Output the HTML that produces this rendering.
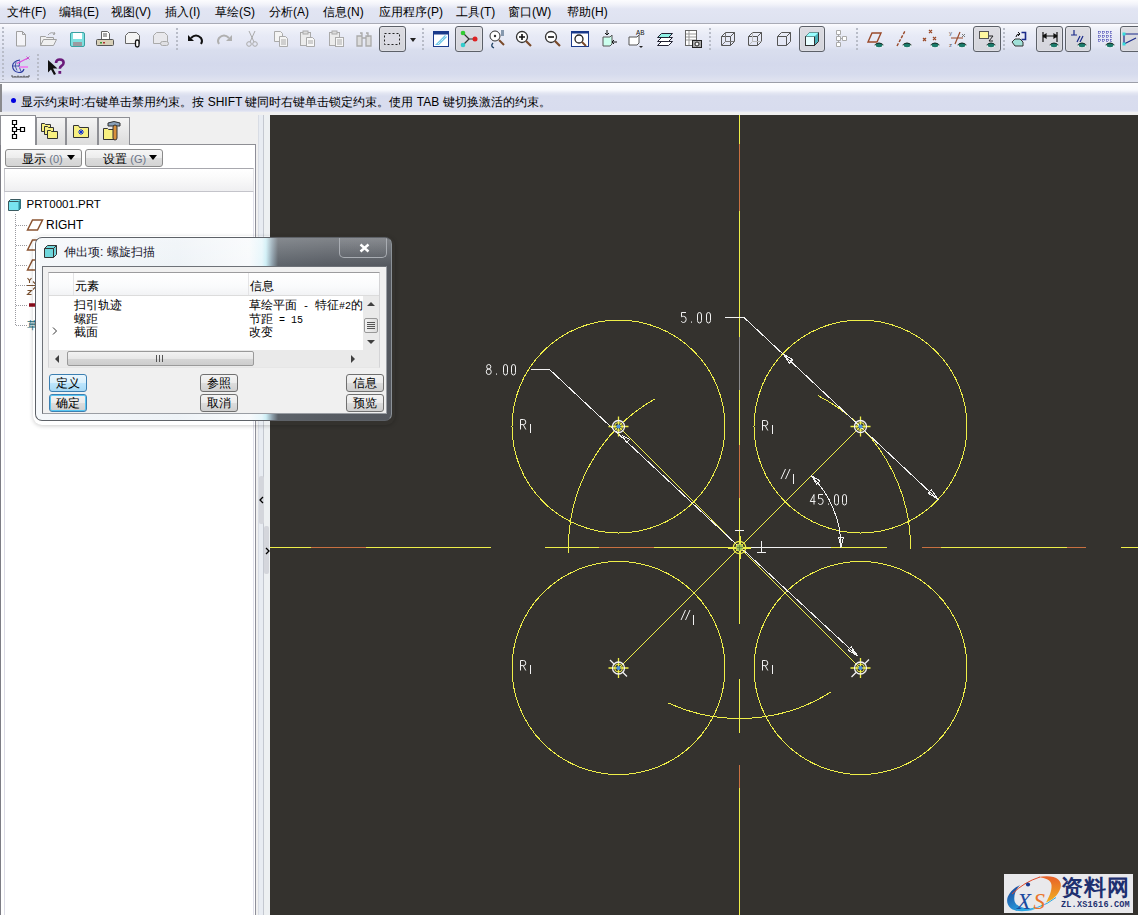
<!DOCTYPE html>
<html><head><meta charset="utf-8">
<style>
*{margin:0;padding:0;box-sizing:border-box}
html,body{width:1138px;height:915px;overflow:hidden;background:#f0f0f0;font-family:"Liberation Sans",sans-serif;font-size:12px;color:#000;position:relative}
.a{position:absolute}
#menubar{left:0;top:0;width:1138px;height:24px;background:linear-gradient(#fcfcfe 0,#f3f4fa 4px,#e2e5f3 9px,#dee2f0 23px);border-bottom:1px solid #a9abb6}
#menubar span{position:absolute;top:4px;font-size:12px}
#toolbar{left:0;top:24px;width:1138px;height:59px;background:linear-gradient(#fcfcff 0,#f0f2f9 4px,#e7eaf6 12px,#e3e6f4 22px,#d9deee 26px,#d4d9ec 40px,#d6dbed 50px,#e0e3f0 57px);border-bottom:1px solid #9c9ea8}
#status{left:0;top:83px;width:1138px;height:29px;background:linear-gradient(#fefeff 0,#f8f9fd 7px,#e4e7f3 10px,#d9ddee 13px,#d8dcee 27px,#e8eaf4 29px)}
#left{left:0;top:112px;width:270px;height:803px;background:#f0f0f0}
#canvas{left:270px;top:115px;width:868px;height:800px;background:#34322e}
.pb{background:linear-gradient(#dcdce2,#d4d5dc);border:1px solid #5c6068;border-radius:3px;box-shadow:inset 0 0 0 1px rgba(255,255,255,.2)}
.sep{width:2px;background:repeating-linear-gradient(#b8bcc8 0 2px,transparent 2px 4px)}
.tab{position:absolute;border:1px solid #8e8f94;border-bottom:none;background:linear-gradient(#f4f4f4,#dcdcdc)}
.btn{position:absolute;border:1px solid #8a8a8a;border-radius:3px;background:linear-gradient(#f6f6f6 0,#ececec 50%,#dcdcdc 51%,#d4d4d4 100%);font-size:12px;text-align:center}
.tree{position:absolute;font-size:12px;white-space:nowrap}
.dbtn{position:absolute;border:1px solid #707070;border-radius:3px;background:linear-gradient(#f3f3f3 0,#ebebeb 50%,#dddddd 51%,#cfcfcf 100%);font-size:12px;text-align:center;line-height:16px;height:18px;width:38px}
</style></head>
<body>
<div id="menubar" class="a">
<span style="left:7px">文件(F)</span>
<span style="left:59px">编辑(E)</span>
<span style="left:111px">视图(V)</span>
<span style="left:165px">插入(I)</span>
<span style="left:215px">草绘(S)</span>
<span style="left:269px">分析(A)</span>
<span style="left:323px">信息(N)</span>
<span style="left:379px">应用程序(P)</span>
<span style="left:456px">工具(T)</span>
<span style="left:508px">窗口(W)</span>
<span style="left:567px">帮助(H)</span>
</div>
<div id="toolbar" class="a"></div>
<div class="a sep" style="left:2px;top:27px;height:53px"></div><svg class="a" style="left:11.0px;top:28.5px" width="20" height="20" viewBox="0 0 20 20"><path d="M5.5,2.5 h6 l3,3 v11.5 h-9z M11.5,2.5 v3 h3" fill="#f4f4f8" stroke="#a0a0a0"/></svg><svg class="a" style="left:38.0px;top:28.5px" width="20" height="20" viewBox="0 0 20 20"><path d="M2.5,16.5 v-9 h5 l1,1 h7 v2 M2.5,16.5 l3,-6 h13 l-3,6z" fill="#f0f0f0" stroke="#a0a0a0"/><path d="M10,6 q3,-4 7,-1 l-1,-2 M17,5 l-2,0.5" fill="none" stroke="#a0a0a0"/></svg><svg class="a" style="left:66.5px;top:28.5px" width="20" height="20" viewBox="0 0 20 20"><rect x="3.5" y="3.5" width="14" height="14" rx="1.5" fill="#7fe0e0" stroke="#3aa0a0"/><rect x="6" y="4" width="9" height="6" fill="#fff"/><rect x="6" y="13" width="9" height="4" fill="#9a9aa0"/></svg><svg class="a" style="left:95.0px;top:28.5px" width="20" height="20" viewBox="0 0 20 20"><path d="M6.5,2.5 h6 l2,2 v6 h-8z" fill="#fff" stroke="#666"/><path d="M8,5h4M8,7h4" stroke="#555"/><rect x="1.5" y="10.5" width="17" height="6" rx="1" fill="#d8d0b8" stroke="#555"/><rect x="5" y="13" width="2" height="1.5" fill="#393"/><rect x="8" y="13" width="2" height="1.5" fill="#a33"/></svg><svg class="a" style="left:122.7px;top:28.5px" width="20" height="20" viewBox="0 0 20 20"><path d="M2.5,6.5 l3,-3 h8 l3,3 v8 h-14z" fill="#f4f4f4" stroke="#666"/><rect x="12.5" y="11" width="3.5" height="7" rx="1.7" fill="#fff" stroke="#111" stroke-width="1.3"/></svg><svg class="a" style="left:150.8px;top:28.5px" width="20" height="20" viewBox="0 0 20 20"><path d="M2.5,6.5 l3,-3 h8 l3,3 v8 h-14z" fill="#e8e8ec" stroke="#aaa"/><rect x="9.5" y="12.5" width="8" height="4" rx="2" fill="#e0e0e4" stroke="#aaa"/></svg><div class="a sep" style="left:176px;top:28px;height:22px"></div><svg class="a" style="left:186.3px;top:28.5px" width="20" height="20" viewBox="0 0 20 20"><path d="M5,9 q5,-5 10,0 q2,3 0,6" fill="none" stroke="#111" stroke-width="2"/><path d="M2,6 v6 h6z" fill="#111"/></svg><svg class="a" style="left:214.0px;top:28.5px" width="20" height="20" viewBox="0 0 20 20"><path d="M15,9 q-5,-5 -10,0 q-2,3 0,6" fill="none" stroke="#b0b0b0" stroke-width="2"/><path d="M18,6 v6 h-6z" fill="#b0b0b0"/></svg><svg class="a" style="left:241.6px;top:28.5px" width="20" height="20" viewBox="0 0 20 20"><path d="M7,2 l5,11 M13,2 l-5,11" stroke="#aaa" fill="none"/><circle cx="7" cy="15" r="2.3" fill="none" stroke="#aaa"/><circle cx="13" cy="15" r="2.3" fill="none" stroke="#aaa"/></svg><svg class="a" style="left:270.8px;top:28.5px" width="20" height="20" viewBox="0 0 20 20"><path d="M3.5,2.5 h6 l2,2 v8 h-8z" fill="#f4f4f4" stroke="#aaa"/><path d="M8.5,7.5 h6 l2,2 v8 h-8z" fill="#f4f4f4" stroke="#aaa"/><path d="M10,11h5M10,13h5M10,15h5" stroke="#aaa"/></svg><svg class="a" style="left:298.2px;top:28.5px" width="20" height="20" viewBox="0 0 20 20"><rect x="2.5" y="3.5" width="10" height="13" fill="#ececec" stroke="#aaa"/><rect x="5" y="2" width="5" height="3" fill="#ddd" stroke="#aaa"/><path d="M8.5,8.5 h6 l2,2 v7 h-8z" fill="#f8f8f8" stroke="#aaa"/><path d="M10,12h5M10,14h5" stroke="#aaa"/></svg><svg class="a" style="left:326.8px;top:28.5px" width="20" height="20" viewBox="0 0 20 20"><rect x="2.5" y="3.5" width="10" height="13" fill="#ececec" stroke="#aaa"/><rect x="5" y="2" width="5" height="3" fill="#ddd" stroke="#aaa"/><rect x="8.5" y="8.5" width="8" height="9" fill="#f8f8f8" stroke="#aaa"/><path d="M10,11h5M10,13h5M10,15h5" stroke="#aaa"/></svg><svg class="a" style="left:354.2px;top:28.5px" width="20" height="20" viewBox="0 0 20 20"><path d="M3,7 h5 v10 h-5z M12,7 h5 v10 h-5z M6,4 h2 v4 M12,4 h2 v4 M8,9 h4" fill="#ddd" stroke="#aaa" stroke-width="1.3"/></svg><div class="a pb" style="left:378.5px;top:26px;width:27.5px;height:25.5px"></div><svg class="a" style="left:382.0px;top:28.5px" width="20" height="20" viewBox="0 0 20 20"><rect x="2.5" y="4.5" width="15" height="11" fill="#dcdce4" stroke="#222" stroke-dasharray="2,2"/></svg><svg class="a" style="left:407.6px;top:33.5px" width="10" height="12" viewBox="0 0 10 12"><path d="M2,4 h6 l-3,4z" fill="#222"/></svg><div class="a sep" style="left:421.5px;top:28px;height:22px"></div><svg class="a" style="left:431.0px;top:28.5px" width="20" height="20" viewBox="0 0 20 20"><rect x="2.5" y="2.5" width="15" height="15" fill="#fff" stroke="#1a3a8a" stroke-width="1"/><rect x="2.5" y="2.5" width="15" height="3" fill="#1a3a8a"/><path d="M4,16 l10,-10 l2,2 l-8,8z" fill="#6fc8e8"/><path d="M7,15 l8,-8" stroke="#fff" stroke-dasharray="1,1"/></svg><div class="a pb" style="left:455px;top:26px;width:28px;height:25.5px"></div><svg class="a" style="left:459.0px;top:28.5px" width="20" height="20" viewBox="0 0 20 20"><path d="M10,10 L4,4 M10,10 H16 M10,10 L4,16" stroke="#333" stroke-width="1.2"/><circle cx="4" cy="4" r="2.3" fill="#3c3"/><circle cx="16" cy="10" r="2.5" fill="#d22"/><circle cx="4" cy="16" r="2.3" fill="#3cc"/></svg><svg class="a" style="left:486.5px;top:28.5px" width="20" height="20" viewBox="0 0 20 20"><circle cx="8" cy="7" r="5" fill="#fff" stroke="#333"/><circle cx="8" cy="7" r="1.2" fill="#333"/><path d="M12,11 l5,5" stroke="#7a4a2a" stroke-width="2"/><path d="M6,14 q-3,3 1,5" stroke="#246" fill="none" stroke-width="1.3"/><path d="M14,2h3M14,4h3M14,6h3" stroke="#246"/></svg><svg class="a" style="left:514.0px;top:28.5px" width="20" height="20" viewBox="0 0 20 20"><circle cx="8" cy="8" r="5.5" fill="#fff" stroke="#333" stroke-width="1.3"/><path d="M5,8h6M8,5v6" stroke="#111" stroke-width="1.6"/><path d="M12,12 l5,5" stroke="#7a4a2a" stroke-width="2.2"/></svg><svg class="a" style="left:543.0px;top:28.5px" width="20" height="20" viewBox="0 0 20 20"><circle cx="8" cy="8" r="5.5" fill="#fff" stroke="#333" stroke-width="1.3"/><path d="M5,8h6" stroke="#111" stroke-width="1.6"/><path d="M12,12 l5,5" stroke="#7a4a2a" stroke-width="2.2"/></svg><svg class="a" style="left:570.0px;top:28.5px" width="20" height="20" viewBox="0 0 20 20"><rect x="1.5" y="2.5" width="17" height="15" fill="#fff" stroke="#1a3a8a"/><rect x="1.5" y="2.5" width="17" height="2" fill="#1a3a8a"/><circle cx="9" cy="10" r="4" fill="none" stroke="#222" stroke-width="1.3"/><path d="M12,13 l4,4" stroke="#7a4a2a" stroke-width="2"/></svg><svg class="a" style="left:598.5px;top:28.5px" width="20" height="20" viewBox="0 0 20 20"><path d="M4,8 h7 l2,-2 v9 l-2,2 h-7z" fill="#cfe" stroke="#555"/><path d="M8,1 v5 M6,4 l2,2 l2,-2 M18,13 h-5 M15,11 l-2,2 l2,2" stroke="#111" fill="none"/></svg><svg class="a" style="left:626.0px;top:28.5px" width="20" height="20" viewBox="0 0 20 20"><path d="M3,8 h8 l2,-2 v8 l-2,2 h-8z" fill="#fff" stroke="#555"/><text x="10" y="6" font-size="7" font-family="Liberation Mono" fill="#222">AB</text><path d="M13,17 h4 l-2,2z" fill="#222"/></svg><svg class="a" style="left:655.0px;top:28.5px" width="20" height="20" viewBox="0 0 20 20"><path d="M2.5,16.5 l4,-4 h11 l-4,4z" fill="#fff" stroke="#223"/><path d="M2.5,12.5 l4,-4 h11 l-4,4z" fill="#fff" stroke="#223"/><path d="M2.5,8.5 l4,-4 h11 l-4,4z" fill="#8ff0e4" stroke="#223"/></svg><svg class="a" style="left:683.0px;top:28.5px" width="20" height="20" viewBox="0 0 20 20"><rect x="2.5" y="1.5" width="11" height="15" fill="#fff" stroke="#666"/><path d="M3,5h10M3,8h10M3,11h10M6,2v14" stroke="#999"/><rect x="9.5" y="11.5" width="9" height="7" fill="#aaa" stroke="#222"/><circle cx="14" cy="15" r="2" fill="#fff" stroke="#222"/></svg><div class="a sep" style="left:708.5px;top:28px;height:22px"></div><svg class="a" style="left:717.7px;top:28.5px" width="20" height="20" viewBox="0 0 20 20"><path d="M3.5,7.5 l4,-4 h9 v9 l-4,4 h-9z" fill="none" stroke="#555"/><path d="M3.5,7.5 h9 v9 M12.5,7.5 l4,-4" fill="none" stroke="#555"/><path d="M3.5,16.5 l4,-4 h9 M7.5,3.5 v9" stroke="#777" fill="none"/></svg><svg class="a" style="left:745.4px;top:28.5px" width="20" height="20" viewBox="0 0 20 20"><path d="M3.5,7.5 l4,-4 h9 v9 l-4,4 h-9z" fill="none" stroke="#555"/><path d="M3.5,7.5 h9 v9 M12.5,7.5 l4,-4" fill="none" stroke="#555"/><path d="M3.5,16.5 l4,-4 h9 M7.5,3.5 v9" stroke="#bbb" fill="none"/></svg><svg class="a" style="left:773.8px;top:28.5px" width="20" height="20" viewBox="0 0 20 20"><path d="M3.5,7.5 l4,-4 h9 v9 l-4,4 h-9z" fill="none" stroke="#555"/><path d="M3.5,7.5 h9 v9 M12.5,7.5 l4,-4" fill="none" stroke="#555"/></svg><div class="a pb" style="left:799px;top:26px;width:26.200000000000045px;height:25.5px"></div><svg class="a" style="left:802.0px;top:28.5px" width="20" height="20" viewBox="0 0 20 20"><path d="M3.5,7.5 l4,-4 h9 v9 l-4,4 h-9z" fill="#4ab0b8" stroke="#333"/><rect x="3.5" y="7.5" width="9" height="9" fill="#e8ffff" stroke="#333"/><path d="M3.5,7.5 l4,-4 h9 l-4,4z" fill="#9ff"/></svg><svg class="a" style="left:829.7px;top:28.5px" width="20" height="20" viewBox="0 0 20 20"><path d="M6.5,1.5h4v4h-4z M6.5,7.5h4v4h-4z M6.5,13.5h4v4h-4z M12.5,7.5h4v4h-4z M8.5,5.5v2 M8.5,11.5v2 M10.5,9.5h2" fill="#fff" stroke="#aaa"/></svg><div class="a sep" style="left:856.4px;top:28px;height:22px"></div><svg class="a" style="left:865.3px;top:28.5px" width="20" height="20" viewBox="0 0 20 20"><path d="M3,13 l4,-9 h9 l-4,9z" fill="none" stroke="#9a4a2a" stroke-width="1.4"/><ellipse cx="14" cy="16" rx="4.5" ry="2.5" fill="#fff"/><ellipse cx="14" cy="16" rx="3.5" ry="2.2" fill="#1b7a6a"/><path d="M9.5,16 q4.5,-4 9,0" stroke="#111" fill="none" stroke-width="0.8"/></svg><svg class="a" style="left:893.0px;top:28.5px" width="20" height="20" viewBox="0 0 20 20"><path d="M4,17 l8,-15" stroke="#9a4a2a" stroke-width="1.4" stroke-dasharray="3,1.5"/><ellipse cx="14" cy="16" rx="4.5" ry="2.5" fill="#fff"/><ellipse cx="14" cy="16" rx="3.5" ry="2.2" fill="#1b7a6a"/><path d="M9.5,16 q4.5,-4 9,0" stroke="#111" fill="none" stroke-width="0.8"/></svg><svg class="a" style="left:920.7px;top:28.5px" width="20" height="20" viewBox="0 0 20 20"><path d="M8,1 l3,3 M11,1 l-3,3 M2,9 l3,3 M5,9 l-3,3 M12,8 l3,3 M15,8 l-3,3" stroke="#9a4a2a" stroke-width="1.2"/><ellipse cx="14" cy="16" rx="4.5" ry="2.5" fill="#fff"/><ellipse cx="14" cy="16" rx="3.5" ry="2.2" fill="#1b7a6a"/><path d="M9.5,16 q4.5,-4 9,0" stroke="#111" fill="none" stroke-width="0.8"/></svg><svg class="a" style="left:948.4px;top:28.5px" width="20" height="20" viewBox="0 0 20 20"><path d="M3,9 h12 M12,3 l-5,12" stroke="#9a4a2a" stroke-width="1.2"/><text x="1" y="6" font-size="6" fill="#555" font-family="Liberation Sans">y</text><text x="1" y="18" font-size="6" fill="#555" font-family="Liberation Sans">z</text><path d="M14,5 l3,3 M17,5 l-3,3" stroke="#777"/><ellipse cx="14" cy="16" rx="4.5" ry="2.5" fill="#fff"/><ellipse cx="14" cy="16" rx="3.5" ry="2.2" fill="#1b7a6a"/><path d="M9.5,16 q4.5,-4 9,0" stroke="#111" fill="none" stroke-width="0.8"/></svg><div class="a pb" style="left:973px;top:26px;width:28px;height:25.5px"></div><svg class="a" style="left:977.0px;top:28.5px" width="20" height="20" viewBox="0 0 20 20"><rect x="2.5" y="2.5" width="9" height="7" fill="#fff8a0" stroke="#555"/><path d="M12,7 h4 l-4,5 h4" stroke="#222" fill="none"/><ellipse cx="14" cy="16" rx="4.5" ry="2.5" fill="#fff"/><ellipse cx="14" cy="16" rx="3.5" ry="2.2" fill="#1b7a6a"/><path d="M9.5,16 q4.5,-4 9,0" stroke="#111" fill="none" stroke-width="0.8"/></svg><div class="a sep" style="left:1003px;top:28px;height:22px"></div><svg class="a" style="left:1010.0px;top:28.5px" width="20" height="20" viewBox="0 0 20 20"><path d="M11.5,3.5 h4 v7 h-4" fill="none" stroke="#1a2a8a" stroke-width="1.6"/><path d="M6,8 q0,-3 4,-3 M8,3 l2,2 l-2,2" stroke="#111" fill="none"/><path d="M2,13 l3,-3 h5 l3,3 v4 h-8z" fill="#a0e0d8" stroke="#333"/></svg><div class="a pb" style="left:1036.3px;top:26px;width:26.90000000000009px;height:25.5px"></div><svg class="a" style="left:1039.7px;top:28.5px" width="20" height="20" viewBox="0 0 20 20"><path d="M3,3 v10 M17,3 v10 M3,7 h14 M3,7 l3,-2 v4z M17,7 l-3,-2 v4z" stroke="#111" fill="#111" stroke-width="1.2"/><ellipse cx="14" cy="16" rx="4.5" ry="2.5" fill="#fff"/><ellipse cx="14" cy="16" rx="3.5" ry="2.2" fill="#1b7a6a"/><path d="M9.5,16 q4.5,-4 9,0" stroke="#111" fill="none" stroke-width="0.8"/></svg><div class="a pb" style="left:1064.5px;top:26px;width:26.90000000000009px;height:25.5px"></div><svg class="a" style="left:1068.0px;top:28.5px" width="20" height="20" viewBox="0 0 20 20"><path d="M3,6 h6 M6,1 v5 M9,13 l3,-6 M12,13 l3,-6" stroke="#1a2a8a" stroke-width="1.2" fill="none"/><ellipse cx="14" cy="16" rx="4.5" ry="2.5" fill="#fff"/><ellipse cx="14" cy="16" rx="3.5" ry="2.2" fill="#1b7a6a"/><path d="M9.5,16 q4.5,-4 9,0" stroke="#111" fill="none" stroke-width="0.8"/></svg><svg class="a" style="left:1095.5px;top:28.5px" width="20" height="20" viewBox="0 0 20 20"><path d="M2,3h14M2,7h14M2,11h14M3,2v12M7,2v12M11,2v12M15,2v12" stroke="#3333aa" stroke-dasharray="1,1"/><ellipse cx="14" cy="16" rx="4.5" ry="2.5" fill="#fff"/><ellipse cx="14" cy="16" rx="3.5" ry="2.2" fill="#1b7a6a"/><path d="M9.5,16 q4.5,-4 9,0" stroke="#111" fill="none" stroke-width="0.8"/></svg><div class="a pb" style="left:1120.3px;top:26px;width:26.700000000000045px;height:25.5px"></div><svg class="a" style="left:1121.0px;top:28.5px" width="20" height="20" viewBox="0 0 20 20"><path d="M3,5 v10 M3,5 h14 M3,15 l12,-6" stroke="#1a2a8a" stroke-width="1.2"/><rect x="1.5" y="3.5" width="3" height="3" fill="#3dd"/><rect x="1.5" y="13.5" width="3" height="3" fill="#3dd"/></svg><svg class="a" style="left:11.0px;top:55.5px" width="20" height="22" viewBox="0 0 20 22"><path d="M9,4 Q2,5 1.5,10 Q2,16 8,16.5 Q12,16.5 13,13" stroke="#2a3aa0" stroke-width="1.1" fill="none"/><path d="M5,6 Q3,10 6,14.5 M9,5 Q6.5,10 10,15.5 M2,10 h7" stroke="#2a3aa0" stroke-width="0.8" fill="none"/><path d="M6,7.5 L17,2" stroke="#e050e0" stroke-width="1.3"/><path d="M15.5,0.5 l3,3 M18.5,0.5 l-3,3" stroke="#c040c0" stroke-width="0.8"/><path d="M8,11 h9" stroke="#f070f0" stroke-width="1.5"/><path d="M1,21 h17 M1,19 v2 M4,20 v1 M7,19.5 v1.5 M10,20 v1 M13,19.5 v1.5 M16,20 v1 M18,19 v2" stroke="#444" stroke-width="0.9"/></svg><div class="a sep" style="left:37px;top:54px;height:26px"></div><svg class="a" style="left:46.0px;top:56.5px" width="20" height="20" viewBox="0 0 20 20"><path d="M2,3 v12.5 l3,-3 l3,5.5 l2,-1 l-3,-5.5 h4.5z" fill="#111"/><path d="M10,6 q0,-3.5 3.8,-3.5 q3.8,0 3.8,3.3 q0,2 -2.2,3.2 q-1.6,0.9 -1.6,2.8" stroke="#6a1a7a" stroke-width="2.6" fill="none"/><rect x="12.4" y="14" width="2.8" height="2.8" fill="#6a1a7a"/></svg>
<div id="status" class="a"><div class="a" style="left:0;top:1px;width:1.5px;height:28px;background:#8a8a8e"></div>
<div class="a" style="left:11px;top:15px;width:5px;height:5px;border-radius:50%;background:#0000e0"></div>
<span class="a" style="left:21px;top:11px;font-size:12px">显示约束时:右键单击禁用约束。按 SHIFT 键同时右键单击锁定约束。使用 TAB 键切换激活的约束。</span>
</div>
<div id="left" class="a"></div>
<div class="a" style="left:0;top:115px;width:1px;height:800px;background:#7c7c84"></div>
<div class="a" style="left:1px;top:144px;width:255px;height:771px;background:#fff;border-top:1px solid #8e8f94"></div>
<div class="a" style="left:4px;top:192px;width:1px;height:723px;background:#dcdce6"></div>
<div class="a" style="left:253px;top:168px;width:1px;height:747px;background:#e0e0ea"></div>
<div class="a" style="left:255px;top:144px;width:1px;height:771px;background:#8e8e98"></div>
<div class="a" style="left:258px;top:115px;width:1px;height:800px;background:#d8dce4"></div>
<div class="a" style="left:259px;top:115px;width:5px;height:800px;background:#e8ecf2"></div>
<div class="a" style="left:263px;top:115px;width:1px;height:800px;background:#c4c8d0"></div>
<div class="a" style="left:264px;top:115px;width:6px;height:800px;background:#edf0f2"></div>
<!-- sash arrows -->
<div class="a" style="left:259px;top:476px;width:5px;height:48px;background:#d4d6dc;border-radius:2px"></div>
<svg class="a" style="left:259px;top:496px" width="6" height="8"><path d="M4,1 l-3,3 l3,3" stroke="#000" stroke-width="1.3" fill="none"/></svg>
<div class="a" style="left:264px;top:526px;width:5px;height:48px;background:#d4d6dc;border-radius:2px"></div>
<svg class="a" style="left:264px;top:547px" width="6" height="8"><path d="M2,1 l3,3 l-3,3" stroke="#000" stroke-width="1.3" fill="none"/></svg>
<!-- tabs -->
<div class="tab" style="left:36px;top:117px;width:30px;height:28px"></div>
<div class="tab" style="left:66px;top:117px;width:32px;height:28px"></div>
<div class="tab" style="left:98px;top:117px;width:32px;height:28px"></div>
<div class="a" style="left:0;top:115px;width:36px;height:30px;background:#fff;border:1px solid #8e8f94;border-bottom:none"></div>
<svg class="a" style="left:8px;top:118px" width="20" height="22"><path d="M4.5,2.5h4v4h-4z M4.5,9.5h4v4h-4z M4.5,16.5h4v4h-4z M12.5,9.5h4v4h-4z M6.5,6.5v3 M6.5,13.5v3 M8.5,11.5h4" fill="#fff" stroke="#000" stroke-width="1.2"/></svg>
<svg class="a" style="left:40px;top:120px" width="22" height="22"><path d="M1.5,3.5h3l1,1h5v7h-9z" fill="#f8f080" stroke="#333"/><path d="M4.5,6.5h3l1,1h5v7h-9z" fill="#f8f080" stroke="#333"/><path d="M7.5,10.5h3l1,1h6v7h-10z" fill="#f8f080" stroke="#333"/></svg>
<svg class="a" style="left:71px;top:122px" width="22" height="20"><path d="M2.5,3.5h5l1,2h9v10h-15z" fill="#f8f080" stroke="#333"/><path d="M10,7v6M7,10h6M8,8l4,4M12,8l-4,4" stroke="#0a2ad8" stroke-width="1"/></svg>
<svg class="a" style="left:102px;top:120px" width="24" height="22"><path d="M1.5,8.5h4l1,1h6v10h-11z" fill="#f8f080" stroke="#333"/><path d="M6,3 q6,-3 12,0 v3 h-12z" fill="#8aa0b8" stroke="#333"/><rect x="11" y="5" width="4" height="15" rx="2" fill="#d8903a" stroke="#333"/></svg>
<!-- buttons -->
<div class="btn" style="left:5px;top:149px;width:77px;height:18px"></div>
<span class="tree" style="left:22px;top:151px">显示 <span style="color:#6a7488;font-size:11px">(0)</span></span>
<svg class="a" style="left:66px;top:154px" width="10" height="8"><path d="M1,1h8l-4,5z" fill="#000"/></svg>
<div class="btn" style="left:85px;top:149px;width:78px;height:18px"></div>
<span class="tree" style="left:103px;top:151px">设置 <span style="color:#6a7488;font-size:11px">(G)</span></span>
<svg class="a" style="left:148px;top:154px" width="10" height="8"><path d="M1,1h8l-4,5z" fill="#000"/></svg>
<div class="a" style="left:4px;top:168px;width:250px;height:24px;background:linear-gradient(#fff 0,#fbfbfb 35%,#efeff1 100%);border:1px solid #c4c4ca;border-top-color:#a8a8ae;border-right-color:#e4e4e8"></div>
<!-- tree -->
<svg class="a" style="left:7px;top:198px" width="16" height="15"><path d="M1.5,3.5 l2,-2 h10 v9 l-2,2 h-10z" fill="#78e4f0" stroke="#3a5a60"/><path d="M11.5,3.5 l2,-2 v9 l-2,2z" fill="#2a8a98"/><path d="M1.5,3.5 h10" stroke="#3a5a60"/></svg>
<span class="tree" style="left:26.5px;top:198px;font-size:11.5px">PRT0001.PRT</span>
<div class="a" style="left:15px;top:214px;width:1px;height:112px;background:repeating-linear-gradient(#9a9aa0 0 1px,transparent 1px 2px)"></div>
<div class="a" style="left:16px;top:225px;width:11px;height:1px;background:repeating-linear-gradient(90deg,#9a9aa0 0 1px,transparent 1px 2px)"></div>
<div class="a" style="left:16px;top:245px;width:11px;height:1px;background:repeating-linear-gradient(90deg,#9a9aa0 0 1px,transparent 1px 2px)"></div>
<div class="a" style="left:16px;top:265px;width:11px;height:1px;background:repeating-linear-gradient(90deg,#9a9aa0 0 1px,transparent 1px 2px)"></div>
<div class="a" style="left:16px;top:285px;width:11px;height:1px;background:repeating-linear-gradient(90deg,#9a9aa0 0 1px,transparent 1px 2px)"></div>
<div class="a" style="left:16px;top:305px;width:11px;height:1px;background:repeating-linear-gradient(90deg,#9a9aa0 0 1px,transparent 1px 2px)"></div>
<div class="a" style="left:16px;top:325px;width:11px;height:1px;background:repeating-linear-gradient(90deg,#9a9aa0 0 1px,transparent 1px 2px)"></div>
<svg class="a" style="left:26px;top:218px" width="18" height="14"><path d="M1.5,12 l5,-10 h10 l-5,10z" fill="none" stroke="#8a5432" stroke-width="1.5"/></svg>
<span class="tree" style="left:46px;top:218px">RIGHT</span>
<svg class="a" style="left:26px;top:238px" width="18" height="14"><path d="M1.5,12 l5,-10 h10 l-5,10z" fill="none" stroke="#8a5432" stroke-width="1.5"/></svg>
<svg class="a" style="left:26px;top:258px" width="18" height="14"><path d="M1.5,12 l5,-10 h10 l-5,10z" fill="none" stroke="#8a5432" stroke-width="1.5"/></svg>
<svg class="a" style="left:26px;top:276px" width="12" height="20"><path d="M1,9.5 h10 M7,5.5 l4,4 l-4,4 M1.5,2 l2,2.5 l2,-2.5 M3.5,4.5 v2.5 M1.5,14.5 h4 l-4,4 h4" stroke="#7a5232" stroke-width="1.1" fill="none"/></svg>
<svg class="a" style="left:29px;top:298px" width="10" height="16"><path d="M0,7 h9" stroke="#8a0a1a" stroke-width="3.5"/><path d="M7.5,1 v14" stroke="#8a0a1a" stroke-width="2"/></svg>
<span class="tree" style="left:27px;top:318px;color:#1a6a7a;font-size:11px">草</span>

<div id="canvas" class="a"></div>
<svg class="a" style="left:270px;top:115px" width="868" height="800" viewBox="270 115 868 800" shape-rendering="crispEdges"><line x1="270" y1="547.5" x2="311" y2="547.5" stroke="#eeee48" stroke-width="1"/><line x1="311" y1="547.5" x2="366" y2="547.5" stroke="#c87040" stroke-width="1"/><line x1="366" y1="547.5" x2="490.5" y2="547.5" stroke="#eeee48" stroke-width="1"/><line x1="545" y1="547.5" x2="599" y2="547.5" stroke="#eeee48" stroke-width="1"/><line x1="599" y1="547.5" x2="654" y2="547.5" stroke="#c87040" stroke-width="1"/><line x1="654" y1="547.5" x2="750" y2="547.5" stroke="#eeee48" stroke-width="1"/><line x1="750" y1="547.5" x2="831" y2="547.5" stroke="#f2f2f2" stroke-width="1"/><line x1="831" y1="547.5" x2="887" y2="547.5" stroke="#eeee48" stroke-width="1"/><line x1="922" y1="547.5" x2="941" y2="547.5" stroke="#c87040" stroke-width="1"/><line x1="941" y1="547.5" x2="1067" y2="547.5" stroke="#eeee48" stroke-width="1"/><line x1="1067" y1="547.5" x2="1086" y2="547.5" stroke="#c87040" stroke-width="1"/><line x1="1121" y1="547.5" x2="1138" y2="547.5" stroke="#eeee48" stroke-width="1"/><line x1="739.5" y1="115" x2="739.5" y2="144" stroke="#eeee48" stroke-width="1"/><line x1="739.5" y1="144" x2="739.5" y2="211" stroke="#c87040" stroke-width="1"/><line x1="739.5" y1="211" x2="739.5" y2="337" stroke="#eeee48" stroke-width="1"/><line x1="739.5" y1="337" x2="739.5" y2="390" stroke="#8a8a8a" stroke-width="1"/><line x1="739.5" y1="390" x2="739.5" y2="445" stroke="#eeee48" stroke-width="1"/><line x1="739.5" y1="445" x2="739.5" y2="498" stroke="#c87040" stroke-width="1"/><line x1="739.5" y1="498" x2="739.5" y2="624" stroke="#eeee48" stroke-width="1"/><line x1="739.5" y1="679" x2="739.5" y2="733" stroke="#eeee48" stroke-width="1"/><line x1="739.5" y1="765" x2="739.5" y2="788" stroke="#c87040" stroke-width="1"/><line x1="739.5" y1="788" x2="739.5" y2="915" stroke="#eeee48" stroke-width="1"/><circle cx="618.5" cy="426.5" r="106.5" fill="none" stroke="#eeee48" stroke-width="1"/><circle cx="860.5" cy="426.5" r="106.5" fill="none" stroke="#eeee48" stroke-width="1"/><circle cx="618.5" cy="668" r="106.5" fill="none" stroke="#eeee48" stroke-width="1"/><circle cx="860.5" cy="668" r="106.5" fill="none" stroke="#eeee48" stroke-width="1"/><path d="M654.48,399.14 A171,171 0 0 0 568.59,553.03" fill="none" stroke="#eeee48" stroke-width="1"/><path d="M817.78,395.47 A171,171 0 0 1 910.49,549.0" fill="none" stroke="#eeee48" stroke-width="1"/><path d="M668.17,702.91 A171,171 0 0 0 831.3,691.77" fill="none" stroke="#eeee48" stroke-width="1"/><line x1="739.5" y1="547.5" x2="618.5" y2="426.5" stroke="#eeee48" stroke-width="1"/><line x1="739.5" y1="547.5" x2="860.5" y2="426.5" stroke="#eeee48" stroke-width="1"/><line x1="739.5" y1="547.5" x2="618.5" y2="668.5" stroke="#eeee48" stroke-width="1"/><line x1="739.5" y1="547.5" x2="860.5" y2="668.5" stroke="#eeee48" stroke-width="1"/><g stroke="#f2f2f2" stroke-width="1" fill="none"><path d="M725,317.5 H744 L938.4,500"/><path d="M530.5,369.5 H549.6 L737,545"/><path d="M743.5,550 L857.7,656"/><path d="M841.0,547.5 A101.5,101.5 0 0 0 811.3,475.7"/><path d="M761.5,541 V552.5 M756.5,552.5 H766"/><path d="M735,530.5 H743.5"/></g><path d="M783.2,354.0 L792.8,359.8 L789.6,363.2 Z" fill="none" stroke="#f2f2f2" stroke-width="1"/><path d="M937.8,499.0 L928.2,493.2 L931.4,489.8 Z" fill="none" stroke="#f2f2f2" stroke-width="1"/><path d="M857.7,656.0 L848.1,650.2 L851.2,646.8 Z" fill="none" stroke="#f2f2f2" stroke-width="1"/><path d="M841.0,547.5 L838.7,537.5 L843.3,537.5 Z" fill="none" stroke="#f2f2f2" stroke-width="1"/><path d="M811.3,475.7 L820.1,481.0 L816.9,484.3 Z" fill="none" stroke="#f2f2f2" stroke-width="1"/><path d="M623.0,436.0 L629.6,439.2 L626.5,442.5 Z" fill="none" stroke="#f2f2f2" stroke-width="1"/><g shape-rendering="geometricPrecision"><path d="M608.5,426.5 H628.5 M618.5,416.5 V436.5" stroke="#eeee48" stroke-width="1.3"/><circle cx="618.5" cy="426.5" r="6" fill="none" stroke="#f2f2f2" stroke-width="1.3"/><circle cx="618.5" cy="426.5" r="4" fill="none" stroke="#eeee48" stroke-width="1"/><circle cx="618.5" cy="426.5" r="2.1" fill="#4a90d8"/></g><g shape-rendering="geometricPrecision"><path d="M850.5,426.5 H870.5 M860.5,416.5 V436.5" stroke="#eeee48" stroke-width="1.3"/><circle cx="860.5" cy="426.5" r="6" fill="none" stroke="#f2f2f2" stroke-width="1.3"/><circle cx="860.5" cy="426.5" r="4" fill="none" stroke="#eeee48" stroke-width="1"/><circle cx="860.5" cy="426.5" r="2.1" fill="#4a90d8"/></g><g shape-rendering="geometricPrecision"><path d="M610,660 L614.5,664.5 M622.5,672 L627,676.5" stroke="#f2f2f2" stroke-width="1.3" fill="none"/><path d="M608.5,668 H628.5 M618.5,658 V678" stroke="#eeee48" stroke-width="1.3"/><circle cx="618.5" cy="668" r="6" fill="none" stroke="#f2f2f2" stroke-width="1.3"/><circle cx="618.5" cy="668" r="4" fill="none" stroke="#eeee48" stroke-width="1"/><circle cx="618.5" cy="668" r="2.1" fill="#4a90d8"/></g><g shape-rendering="geometricPrecision"><path d="M869,659.5 L865,663.5 M856,672.5 L851.5,677" stroke="#f2f2f2" stroke-width="1.3" fill="none"/><path d="M850.5,668 H870.5 M860.5,658 V678" stroke="#eeee48" stroke-width="1.3"/><circle cx="860.5" cy="668" r="6" fill="none" stroke="#f2f2f2" stroke-width="1.3"/><circle cx="860.5" cy="668" r="4" fill="none" stroke="#eeee48" stroke-width="1"/><circle cx="860.5" cy="668" r="2.1" fill="#4a90d8"/></g><path d="M728,547.5 H751 M739.5,536 V559" stroke="#eeee48" stroke-width="2"/><circle cx="739.5" cy="547.5" r="6.2" fill="none" stroke="#eeee48" stroke-width="1.3" shape-rendering="geometricPrecision"/><circle cx="739.5" cy="547.5" r="3.6" fill="#9cc060" stroke="#eeee48" stroke-width="0.8" shape-rendering="geometricPrecision"/><path d="M736.5,547.5 h6 M739.5,544.5 v6" stroke="#5a7a3a" stroke-width="0.8"/><path shape-rendering="geometricPrecision" transform="translate(681,312)" d="M5,0.5 h-4.5 v4.3 q0.8,-0.5 2,-0.5 q2.7,0 2.7,3 q0,3.2 -2.7,3.2 q-1.5,0 -2.3,-1.2" fill="none" stroke="#f2f2f2" stroke-width="1"/><path shape-rendering="geometricPrecision" transform="translate(689,312)" d="M2.5,9.5 v1.2" fill="none" stroke="#f2f2f2" stroke-width="1"/><path shape-rendering="geometricPrecision" transform="translate(697,312)" d="M2.5,0.5 q2,0 2,2.5 v5.5 q0,2.5 -2,2.5 q-2,0 -2,-2.5 v-5.5 q0,-2.5 2,-2.5z" fill="none" stroke="#f2f2f2" stroke-width="1"/><path shape-rendering="geometricPrecision" transform="translate(706,312)" d="M2.5,0.5 q2,0 2,2.5 v5.5 q0,2.5 -2,2.5 q-2,0 -2,-2.5 v-5.5 q0,-2.5 2,-2.5z" fill="none" stroke="#f2f2f2" stroke-width="1"/><path shape-rendering="geometricPrecision" transform="translate(486,364)" d="M2.75,0.5 q2.1,0 2.1,2.3 q0,2.2 -2.1,2.2 q-2.1,0 -2.1,-2.2 q0,-2.3 2.1,-2.3z M2.75,5 q2.5,0 2.5,2.8 q0,2.7 -2.5,2.7 q-2.5,0 -2.5,-2.7 q0,-2.8 2.5,-2.8z" fill="none" stroke="#f2f2f2" stroke-width="1"/><path shape-rendering="geometricPrecision" transform="translate(494,364)" d="M2.5,9.5 v1.2" fill="none" stroke="#f2f2f2" stroke-width="1"/><path shape-rendering="geometricPrecision" transform="translate(503,364)" d="M2.5,0.5 q2,0 2,2.5 v5.5 q0,2.5 -2,2.5 q-2,0 -2,-2.5 v-5.5 q0,-2.5 2,-2.5z" fill="none" stroke="#f2f2f2" stroke-width="1"/><path shape-rendering="geometricPrecision" transform="translate(511,364)" d="M2.5,0.5 q2,0 2,2.5 v5.5 q0,2.5 -2,2.5 q-2,0 -2,-2.5 v-5.5 q0,-2.5 2,-2.5z" fill="none" stroke="#f2f2f2" stroke-width="1"/><path shape-rendering="geometricPrecision" transform="translate(810,494)" d="M4,10.5 v-10 l-3.8,7 h5.3" fill="none" stroke="#f2f2f2" stroke-width="1"/><path shape-rendering="geometricPrecision" transform="translate(818,494)" d="M5,0.5 h-4.5 v4.3 q0.8,-0.5 2,-0.5 q2.7,0 2.7,3 q0,3.2 -2.7,3.2 q-1.5,0 -2.3,-1.2" fill="none" stroke="#f2f2f2" stroke-width="1"/><path shape-rendering="geometricPrecision" transform="translate(826,494)" d="M2.5,9.5 v1.2" fill="none" stroke="#f2f2f2" stroke-width="1"/><path shape-rendering="geometricPrecision" transform="translate(834,494)" d="M2.5,0.5 q2,0 2,2.5 v5.5 q0,2.5 -2,2.5 q-2,0 -2,-2.5 v-5.5 q0,-2.5 2,-2.5z" fill="none" stroke="#f2f2f2" stroke-width="1"/><path shape-rendering="geometricPrecision" transform="translate(842,494)" d="M2.5,0.5 q2,0 2,2.5 v5.5 q0,2.5 -2,2.5 q-2,0 -2,-2.5 v-5.5 q0,-2.5 2,-2.5z" fill="none" stroke="#f2f2f2" stroke-width="1"/><path transform="translate(520,419)" d="M0.5,10.5 v-10 h3 q2.3,0 2.3,2.6 q0,2.5 -2.3,2.5 h-3 M3.2,5.6 l2.6,4.9" fill="none" stroke="#f2f2f2" stroke-width="1" shape-rendering="geometricPrecision"/><path d="M530.5,424 v9" stroke="#f2f2f2" stroke-width="1"/><path transform="translate(762,420)" d="M0.5,10.5 v-10 h3 q2.3,0 2.3,2.6 q0,2.5 -2.3,2.5 h-3 M3.2,5.6 l2.6,4.9" fill="none" stroke="#f2f2f2" stroke-width="1" shape-rendering="geometricPrecision"/><path d="M772.5,425 v9" stroke="#f2f2f2" stroke-width="1"/><path transform="translate(520,660)" d="M0.5,10.5 v-10 h3 q2.3,0 2.3,2.6 q0,2.5 -2.3,2.5 h-3 M3.2,5.6 l2.6,4.9" fill="none" stroke="#f2f2f2" stroke-width="1" shape-rendering="geometricPrecision"/><path d="M530.5,665 v9" stroke="#f2f2f2" stroke-width="1"/><path transform="translate(762,660)" d="M0.5,10.5 v-10 h3 q2.3,0 2.3,2.6 q0,2.5 -2.3,2.5 h-3 M3.2,5.6 l2.6,4.9" fill="none" stroke="#f2f2f2" stroke-width="1" shape-rendering="geometricPrecision"/><path d="M772.5,665 v9" stroke="#f2f2f2" stroke-width="1"/><path d="M781,479 l4.5,-10 M785.5,479 l4.5,-10 M793.5,474 v10" stroke="#f2f2f2" stroke-width="1" fill="none" shape-rendering="geometricPrecision"/><path d="M681,620 l4.5,-10 M685.5,620 l4.5,-10 M693.5,615 v10" stroke="#f2f2f2" stroke-width="1" fill="none" shape-rendering="geometricPrecision"/></svg>
<div class="a" style="left:33px;top:236px;width:362px;height:189px;border-radius:9px;box-shadow:0 1px 4px 0 rgba(0,0,0,.2)"></div>
<div class="a" style="left:35px;top:237px;width:357px;height:184px;border-radius:7px;border:1px solid #5e6268;border-right-color:#8c9298;overflow:hidden;background:linear-gradient(90deg,#f4f7fa 0,#eef3f7 40%,#f8fafc 60%,#e6f6fb 226px,#cdeef5 230px,#8fa2ae 236px,#5d636a 242px,#575c63 290px,#54585f 100%)">
  <div class="a" style="left:0;top:0;width:357px;height:28px;background:linear-gradient(rgba(255,255,255,.25),rgba(255,255,255,0))"></div>
  <div class="a" style="left:303px;top:-1px;width:48px;height:21px;border:1px solid #a9adb3;border-top:none;border-radius:0 0 5px 5px;background:linear-gradient(rgba(255,255,255,.08),rgba(255,255,255,0))"></div>
  <svg class="a" style="left:322px;top:5px" width="13" height="10"><path d="M2.5,1.5 L10.5,8.5 M10.5,1.5 L2.5,8.5" stroke="#fff" stroke-width="2.4" stroke-linecap="butt"/></svg>
  <div class="a" style="left:0;top:0;width:4px;height:184px;background:linear-gradient(rgba(255,255,255,.6),rgba(255,255,255,.2))"></div>
</div>
<svg class="a" style="left:43px;top:244px" width="16" height="15"><path d="M1.5,4.5 l3,-3 h9 v9 l-3,3 h-9z" fill="#6fd6dc" stroke="#333"/><path d="M10.5,4.5 v9 M10.5,4.5 l3,-3 M1.5,4.5 h9" stroke="#333" fill="none"/></svg>
<span class="a" style="left:64px;top:244px;font-size:12px;color:#1a2030">伸出项: 螺旋扫描</span>
<!-- client -->
<div class="a" style="left:42px;top:266px;width:345px;height:148px;background:#f0f0f0;border:1px solid #6e7278;border-right-color:#9a9ea4;border-bottom-color:#9a9ea4"></div>
<div class="a" style="left:48px;top:272px;width:332px;height:96px;background:#fff;border:1px solid #d4d4d6;border-top-color:#9c9c9e;border-bottom-color:#e6e6e6"></div>
<div class="a" style="left:49px;top:273px;width:330px;height:23px;background:linear-gradient(#fff 0,#fafbfc 60%,#f2f3f5 100%);border-bottom:1px solid #dcdcdc"></div>
<div class="a" style="left:73px;top:273px;width:1px;height:22px;background:#e4e4e6"></div>
<div class="a" style="left:248px;top:273px;width:1px;height:22px;background:#e4e4e6"></div>
<span class="a" style="left:75px;top:278px">元素</span>
<span class="a" style="left:250px;top:278px">信息</span>
<span class="a" style="left:74px;top:297px">扫引轨迹</span><span class="a" style="left:74px;top:310.5px">螺距</span><span class="a" style="left:74px;top:324px">截面</span>
<div class="a" style="left:249px;top:297px;width:114px;height:14px;overflow:hidden;white-space:nowrap">草绘平面<span style="font-family:'Liberation Mono',monospace;font-size:10px"> - </span>特征<span style="font-family:'Liberation Mono',monospace;font-size:10px">#2</span>的</div><span class="a" style="left:249px;top:310.5px;white-space:nowrap">节距<span style="font-family:'Liberation Mono',monospace;font-size:10px"> = 15</span></span><span class="a" style="left:249px;top:324px">改变</span>
<svg class="a" style="left:51px;top:326px" width="8" height="10"><path d="M2,1.5 l3.5,3.5 l-3.5,3.5" stroke="#333" fill="none"/></svg>
<!-- vscroll -->
<div class="a" style="left:363px;top:296px;width:16px;height:71px;background:#eaeaea"></div>
<svg class="a" style="left:366px;top:300px" width="10" height="8"><path d="M1,6 l4,-4 l4,4z" fill="#404040"/></svg>
<div class="a" style="left:364px;top:318px;width:14px;height:15px;border:1px solid #989898;border-radius:2px;background:linear-gradient(90deg,#f2f2f2,#dcdcdc)"></div>
<div class="a" style="left:367px;top:322px;width:8px;height:7px;background:repeating-linear-gradient(#555 0 1px,transparent 1px 2px)"></div>
<svg class="a" style="left:366px;top:338px" width="10" height="8"><path d="M1,2 l4,4 l4,-4z" fill="#404040"/></svg>
<!-- hscroll -->
<div class="a" style="left:49px;top:350px;width:314px;height:17px;background:#eaeaea"></div>
<svg class="a" style="left:53px;top:354px" width="8" height="10"><path d="M6,1 l-4,4 l4,4z" fill="#404040"/></svg>
<div class="a" style="left:67px;top:351px;width:187px;height:15px;border:1px solid #9a9a9a;border-radius:2px;background:linear-gradient(#f3f3f3 0,#e8e8e8 50%,#d6d6d6 51%,#cdcdcd 100%)"></div>
<div class="a" style="left:156px;top:355px;width:7px;height:7px;background:repeating-linear-gradient(90deg,#555 0 1px,transparent 1px 3px)"></div>
<svg class="a" style="left:349px;top:354px" width="8" height="10"><path d="M2,1 l4,4 l-4,4z" fill="#404040"/></svg>
<!-- buttons -->
<div class="dbtn" style="left:49px;top:374px;border-color:#3c7fb1;background:linear-gradient(#eaf6fd 0,#d9f0fc 50%,#bee6fd 51%,#a7d9f5 100%)">定义</div>
<div class="dbtn" style="left:49px;top:394px;border-color:#3c7fb1;box-shadow:inset 0 0 0 1px #58c6f2;background:linear-gradient(#f2f2f2 0,#ebebeb 50%,#dddddd 51%,#cfcfcf 100%)">确定</div>
<div class="dbtn" style="left:200px;top:374px">参照</div>
<div class="dbtn" style="left:200px;top:394px">取消</div>
<div class="dbtn" style="left:346px;top:374px">信息</div>
<div class="dbtn" style="left:346px;top:394px">预览</div>

<div class="a" style="left:1004px;top:874px;width:129px;height:39px;background:#e9e9ec;overflow:hidden">
<svg class="a" style="left:0;top:0" width="60" height="39"><defs><linearGradient id="lb" x1="0" y1="0" x2="0.6" y2="1"><stop offset="0" stop-color="#1a3c90"/><stop offset="1" stop-color="#2aa8e8"/></linearGradient><linearGradient id="lo" x1="0" y1="0" x2="0" y2="1"><stop offset="0" stop-color="#e8602a"/><stop offset="1" stop-color="#f0b020"/></linearGradient></defs>
<path d="M16,11 C4,17 -1,28 7,34.5 C13,38.5 22,37.5 31,35.5 C21,35 12,33 10.5,27 C9.5,21 12,15 16,11 Z" fill="url(#lb)"/>
<path d="M12,36 Q35,37 52,23.5" stroke="#30a8e0" stroke-width="1" fill="none"/>
<path d="M34,3 C50,0 59,5 56.5,14 C54,22 48,26 42,28.5 C45,23 48,17 47.5,11 C47,6 42,4 34,3 Z" fill="url(#lo)"/>
<path d="M8,20 Q20,8 36,3" stroke="#e04a2a" stroke-width="1" fill="none"/>
<circle cx="24" cy="10.5" r="2.1" fill="#1a3a90"/>
<text x="13" y="35" font-family="Liberation Serif" font-style="italic" font-size="23" fill="#1a4aa0">X</text>
<text x="29.5" y="35" font-family="Liberation Serif" font-style="italic" font-size="23" fill="#ea742a">S</text></svg>
<span class="a" style="left:57px;top:2px;font-size:22px;font-weight:bold;color:#1e3070;letter-spacing:1px;line-height:24px">资料网</span>
<span class="a" style="left:57px;top:26px;font-family:'Liberation Mono',monospace;font-size:8.5px;font-weight:bold;color:#1e3070;line-height:10px;letter-spacing:0.2px">ZL.XS1616.COM</span>
</div>

</body></html>
